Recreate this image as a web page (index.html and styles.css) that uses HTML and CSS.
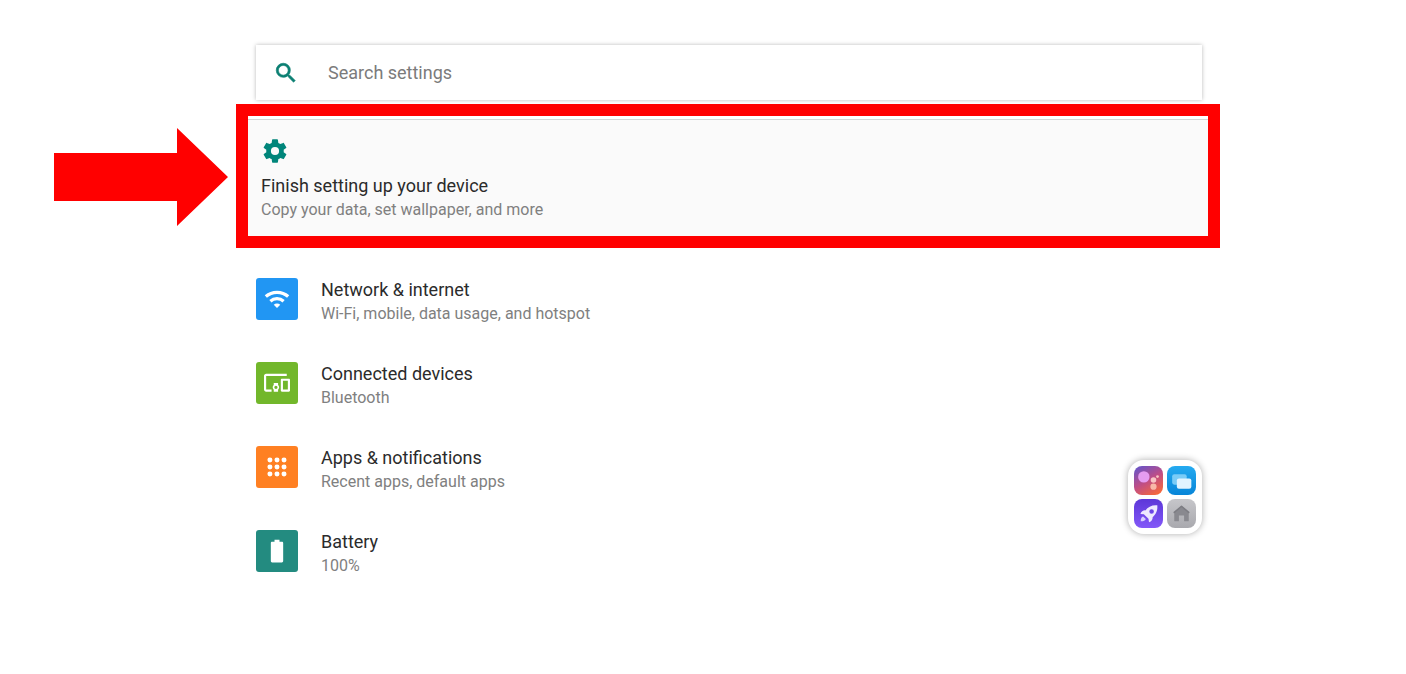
FILE: index.html
```html
<!DOCTYPE html>
<html lang="en">
<head>
<meta charset="utf-8">
<meta name="viewport" content="width=device-width, initial-scale=1">
<title>Settings</title>
<link rel="stylesheet" href="styles.css">
</head>
<body>
<main class="page">
  <label class="search">
    <svg class="search-icon" viewBox="0 0 24 24" aria-hidden="true"><path fill="currentColor" stroke="currentColor" stroke-width=".6" d="M15.5 14h-.79l-.28-.27A6.47 6.47 0 0 0 16 9.5 6.5 6.5 0 1 0 9.500 16c1.610 0 3.090-.59 4.230-1.570l.27.28v.79l5 4.990L20.490 19l-4.990-5zm-6 0C7.010 14 5 11.990 5 9.500S7.010 5 9.500 5 14 7.010 14 9.500 11.990 14 9.500 14z"/></svg>
    <input class="search-input" type="text" placeholder="Search settings" aria-label="Search settings">
  </label>

  <section class="highlight">
    <svg class="arrow" viewBox="0 0 174 98" aria-hidden="true"><path fill="#f00" d="M0 25h123V0l51 49-51 49V73H0z"/></svg>
    <a class="setup" href="#setup">
      <svg class="setup-icon" viewBox="0 0 24 24" aria-hidden="true"><path fill="currentColor" d="M19.43 12.98c.04-.32.07-.64.07-.98s-.03-.66-.07-.98l2.11-1.65c.19-.15.24-.42.12-.64l-2-3.46c-.12-.22-.39-.3-.61-.22l-2.49 1c-.52-.4-1.08-.73-1.69-.98l-.38-2.65A.49.49 0 0 0 14 2h-4c-.25 0-.46.18-.49.42l-.38 2.65c-.61.25-1.17.59-1.69.98l-2.49-1c-.23-.09-.49 0-.61.22l-2 3.46c-.13.22-.07.49.12.64l2.11 1.65c-.04.32-.07.65-.07.98s.03.66.07.98l-2.11 1.65c-.19.15-.24.42-.12.64l2 3.46c.12.22.39.3.61.22l2.49-1c.52.4 1.08.73 1.69.98l.38 2.65c.03.24.24.42.49.42h4c.25 0 .46-.18.49-.42l.38-2.65c.61-.25 1.17-.59 1.69-.98l2.49 1c.23.09.49 0 .61-.22l2-3.46c.12-.22.07-.49-.12-.64l-2.11-1.65zM12 15.5a3.5 3.5 0 1 1 0-7 3.5 3.5 0 0 1 0 7z"/></svg>
      <span class="title">Finish setting up your device</span>
      <span class="summary">Copy your data, set wallpaper, and more</span>
    </a>
  </section>

  <nav class="list">
    <a class="row" href="#network">
      <span class="tile blue"><svg viewBox="0 0 24 24" aria-hidden="true"><path fill="none" stroke="#fff" stroke-width="3" d="M1.700 9.700c5.700-5.200 14.900-5.200 20.600 0M5.900 14c3.400-3 8.800-3 12.200 0"/><path fill="#fff" d="M9 17.300c1.650-1.500 4.340-1.500 6 0l-3 3z"/></svg></span>
      <span class="text"><span class="title">Network &amp; internet</span><span class="summary">Wi-Fi, mobile, data usage, and hotspot</span></span>
    </a>
    <a class="row" href="#devices">
      <span class="tile green"><svg viewBox="0 0 24 24" aria-hidden="true"><path fill="#fff" d="M2 5.500h19v-2H2c-1.100 0-2 .9-2 2V18c0 1.100.9 2 2 2h5v-2H2V5.500zM13 12H9v1.780c-.61.55-1 1.330-1 2.220s.39 1.670 1 2.220V20h4v-1.780c.61-.55 1-1.340 1-2.220s-.39-1.670-1-2.220V12zm-2 5.500a1.500 1.500 0 1 1 0-3 1.500 1.500 0 0 1 0 3zM23 8h-6.500c-.5 0-1 .5-1 1v10c0 .5.5 1 1 1H23c.5 0 1-.5 1-1V9c0-.5-.5-1-1-1zm-1 10h-4.500v-8H22v8z"/></svg></span>
      <span class="text"><span class="title">Connected devices</span><span class="summary">Bluetooth</span></span>
    </a>
    <a class="row" href="#apps">
      <span class="tile orange"><svg viewBox="0 0 24 24" aria-hidden="true"><g fill="#fff"><circle cx="5.500" cy="5.500" r="2.300"/><circle cx="12" cy="5.500" r="2.300"/><circle cx="18.500" cy="5.500" r="2.300"/><circle cx="5.500" cy="12" r="2.300"/><circle cx="12" cy="12" r="2.300"/><circle cx="18.500" cy="12" r="2.300"/><circle cx="5.500" cy="18.500" r="2.300"/><circle cx="12" cy="18.500" r="2.300"/><circle cx="18.500" cy="18.500" r="2.300"/></g></svg></span>
      <span class="text"><span class="title">Apps &amp; notifications</span><span class="summary">Recent apps, default apps</span></span>
    </a>
    <a class="row" href="#battery">
      <span class="tile teal"><svg viewBox="0 0 24 24" aria-hidden="true"><path fill="#fff" d="M16.500 3.500H14.300V1.500H9.700v2H7.500c-.7 0-1.200.5-1.200 1.200v16.600c0 .7.5 1.200 1.200 1.200h9c.7 0 1.200-.5 1.200-1.200V4.700c0-.7-.5-1.200-1.200-1.200z"/></svg></span>
      <span class="text"><span class="title">Battery</span><span class="summary">100%</span></span>
    </a>
  </nav>
</main>

<div class="folder">
  <button class="app assistant" type="button" aria-label="Assistant"><svg viewBox="0 0 28 28" aria-hidden="true"><circle cx="9.500" cy="10.500" r="5.500" fill="#e59cf0"/><circle cx="18.800" cy="13.500" r="2.700" fill="#f8c5c5"/><circle cx="22.700" cy="10.200" r="1.300" fill="#f8c5c5"/><circle cx="18.800" cy="20" r="3" fill="#f9b9a8"/></svg></button>
  <button class="app windows" type="button" aria-label="Windows"><svg viewBox="0 0 28 28" aria-hidden="true"><rect x="5" y="8" width="14" height="10" rx="2" fill="#7accf7"/><rect x="9.500" y="12" width="14" height="10" rx="2" fill="#e2f4ff"/></svg></button>
  <button class="app rocket" type="button" aria-label="Launcher"><svg viewBox="0 0 28 28" aria-hidden="true"><path fill="#eee9ff" fill-rule="evenodd" d="M22.500 6c-5-.5-9 1.500-11.500 5-2.200-.2-3.800 1-4.800 3.500l3.300.3 4.500 4.200.5 3.500c2.500-1 3.700-2.800 3.500-5 3.300-2.700 5-6.500 4.500-11.500zM17 9.800a2.200 2.200 0 1 1 0 4.400 2.200 2.200 0 0 1 0-4.400z"/><path fill="#d8ceff" d="M8.800 16.800c-1.700.5-2.400 2.200-2.300 4.700 2.500.1 4.300-.6 4.900-2.300z"/></svg></button>
  <button class="app home" type="button" aria-label="Home"><svg viewBox="0 0 28 28" aria-hidden="true"><path fill="#89898f" d="M14 7l7 6v8.500h-4.500v-5.500h-5v5.500H7V13z"/><path fill="none" stroke="#7c7c82" stroke-width="1.500" stroke-linecap="round" stroke-linejoin="round" d="M7 13l7-6 7 6"/></svg></button>
</div>
</body>
</html>
```
FILE: styles.css
```css
* {
  box-sizing: border-box;
}

body {
  margin: 0;
  background: #fff;
  color: #2b2b2b;
  font-family: Roboto, "Liberation Sans", sans-serif;
}

a {
  color: inherit;
  text-decoration: none;
}

.page {
  padding: 45px 186px 32px 236px;
}

.search {
  display: flex;
  align-items: center;
  gap: 29px;
  height: 55px;
  margin: 0 18px 0 20px;
  padding: 0 17px;
  background: #fff;
  box-shadow: 0 0 4px rgba(0, 0, 0, 0.28);
}

.search-icon {
  flex: none;
  width: 26px;
  height: 26px;
  color: #0b7f72;
}

.search-input {
  flex: 1;
  min-width: 0;
  padding: 0;
  border: 0;
  outline: 0;
  background: none;
  color: #2b2b2b;
  font: 18px/24px Roboto, "Liberation Sans", sans-serif;
}

.search-input::placeholder {
  color: #7b7b7b;
  opacity: 1;
}

.highlight {
  position: relative;
  margin-top: 4px;
  padding-top: 3px;
  border: 12px solid #f00;
  background: #fff;
}

.arrow {
  position: absolute;
  top: 12px;
  right: 100%;
  width: 174px;
  height: 98px;
  margin-right: 20px;
}

.setup {
  display: flex;
  flex-direction: column;
  padding: 17px 13px 14px;
  border-top: 1px solid #d4d4d4;
  background: #fafafa;
}

.setup-icon {
  width: 28px;
  height: 28px;
  margin-bottom: 9px;
  color: #00857a;
}

.title,
.summary {
  display: block;
  line-height: 24px;
}

.title {
  font-size: 18px;
}

.summary {
  color: #808080;
  font-size: 16px;
}

.list {
  margin: 9px 18px 0 20px;
}

.row {
  display: flex;
  align-items: flex-start;
  gap: 23px;
  padding: 21px 0 15px;
}

.tile {
  display: grid;
  place-items: center;
  flex: none;
  width: 42px;
  height: 42px;
  border-radius: 3px;
}

.tile svg {
  width: 26px;
  height: 26px;
}

.blue {
  background: #2196f3;
}

.green {
  background: #72b72b;
}

.orange {
  background: #ff8022;
}

.teal {
  background: #238b80;
}

.folder {
  position: fixed;
  right: 204px;
  bottom: 140px;
  display: grid;
  grid-template-columns: 29px 29px;
  gap: 4px;
  padding: 6px;
  border-radius: 16px;
  background: #fff;
  box-shadow: 0 0 7px rgba(0, 0, 0, 0.32);
}

.app {
  width: 29px;
  height: 29px;
  padding: 0;
  border: 0;
  border-radius: 8px;
}

.app svg {
  display: block;
  width: 100%;
  height: 100%;
}

.assistant {
  background: linear-gradient(150deg, #6754c8 5%, #c04d85 50%, #f4683f 90%);
}

.windows {
  background: linear-gradient(#25aaf0, #0785d8);
}

.rocket {
  background: linear-gradient(#5c37d8, #8358f8);
}

.home {
  background: linear-gradient(#c6c6ca, #a9a9ae);
}
```
